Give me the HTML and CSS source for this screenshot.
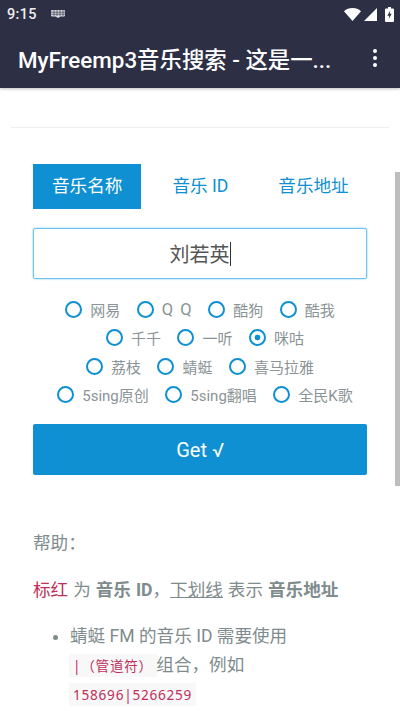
FILE: index.html
```html
<!doctype html>
<html lang="zh-cn">
<head>
<meta charset="UTF-8">
<title>MyFreemp3音乐搜索</title>
<link rel="stylesheet" href="styles.css">
</head>
<body>
<div class="phone">
	<header class="appbar">
		<div class="status">
			<span class="time">9:15</span>
			<svg class="kbd" width="14" height="8" viewBox="0 0 14 8"><path fill="#d9d9de" d="M1 0h12a1 1 0 0 1 1 1v4.500a1 1 0 0 1-1 1H9.500L7 8 4.500 6.500H1a1 1 0 0 1-1-1V1a1 1 0 0 1 1-1z"/><path stroke="#2d2f45" stroke-width=".6" d="M0 2.200h14M0 4.200h14M3 0v6M6 0v6M9 0v6M12 0v6"/></svg>
			<span class="status_icons">
				<svg class="wifi" width="17" height="13" viewBox="0 0 17 13"><path fill="#fff" d="M0 3.200C2.300 1.200 5.200 0 8.500 0s6.200 1.200 8.500 3.200L8.500 13z"/></svg>
				<svg class="signal" width="13" height="13" viewBox="0 0 13 13"><path fill="#fff" d="M13 0v13H0z"/></svg>
				<svg width="9" height="15" viewBox="0 0 9 15"><path fill="#fff" fill-rule="evenodd" d="M3 0h3v1.500h2a1 1 0 0 1 1 1V14a1 1 0 0 1-1 1H1a1 1 0 0 1-1-1V2.500a1 1 0 0 1 1-1h2zM5.300 3.500L2.300 8.800h1.900l-.5 3.200 3-5.300H4.800z"/></svg>
			</span>
		</div>
		<div class="toolbar">
			<h1>MyFreemp3音乐搜索 - 这是一...</h1>
			<div class="more"><i></i><i></i><i></i></div>
		</div>
	</header>
	<main class="content">
		<hr class="top_line">
		<div class="tabs">
			<a class="tab current">音乐名称</a>
			<a class="tab">音乐 ID</a>
			<a class="tab">音乐地址</a>
		</div>
		<div class="search_box"><span class="search_text">刘若英</span><span class="caret"></span></div>
		<div class="sources">
			<div class="source_row">
				<label class="source"><span class="radio"></span>网易</label>
				<label class="source"><span class="radio"></span><span class="qq">Q Q</span></label>
				<label class="source"><span class="radio"></span>酷狗</label>
				<label class="source"><span class="radio"></span>酷我</label>
			</div>
			<div class="source_row shift">
				<label class="source"><span class="radio"></span>千千</label>
				<label class="source"><span class="radio"></span>一听</label>
				<label class="source"><span class="radio checked"></span>咪咕</label>
			</div>
			<div class="source_row">
				<label class="source"><span class="radio"></span>荔枝</label>
				<label class="source"><span class="radio"></span>蜻蜓</label>
				<label class="source"><span class="radio"></span>喜马拉雅</label>
			</div>
			<div class="source_row shift">
				<label class="source"><span class="radio"></span>5sing原创</label>
				<label class="source"><span class="radio"></span>5sing翻唱</label>
				<label class="source"><span class="radio"></span>全民K歌</label>
			</div>
		</div>
		<button class="get_btn">Get √</button>
		<p class="help_title">帮助：</p>
		<p class="help_line"><span class="red">标红</span> 为 <strong>音乐 ID</strong>，<u>下划线</u> 表示 <strong>音乐地址</strong></p>
		<ul class="help_list">
			<li>蜻蜓 FM 的音乐 ID 需要使用<br><code>|（管道符）</code> 组合，例如<br><code>158696|5266259</code></li>
		</ul>
	</main>
	<div class="scrollbar"></div>
</div>
</body>
</html>
```
FILE: styles.css
```css
html,body {margin: 0;padding: 0;}
body {font-family: Roboto,"Noto Sans CJK SC",sans-serif;background-color: #fff;}

.phone {position: relative;width: 400px;height: 711px;overflow: hidden;}

/* 顶部 */
.appbar {height: 88px;background-color: #2d2f45;color: #fff;box-shadow: 0 1px 3px rgba(0,0,0,.25);}
.status {display: flex;align-items: center;height: 28px;padding: 0 6px 0 7px;}
.time {font-size: 14.500px;font-weight: 500;color: #eee;letter-spacing: .3px;}
.kbd {margin-left: 14px;}
.status_icons {display: flex;align-items: center;margin-left: auto;}
.signal {margin: 0 8px 0 3px;}
.toolbar {display: flex;align-items: center;justify-content: space-between;height: 62px;padding: 0 23px 2px 18px;box-sizing: border-box;}
.toolbar h1 {margin: 0;font-size: 22.400px;font-weight: 500;white-space: nowrap;}
.more {display: flex;flex-direction: column;gap: 3px;}
.more i {display: block;width: 4px;height: 4px;border-radius: 50%;background-color: #fff;}

/* 内容 */
.content {padding: 39px 33px 0;color: #7f8c8d;font-size: 17.600px;}
.top_line {height: 1px;margin: 0 -22px 36px;border: 0 none;background-color: #eee;}

.tabs {display: flex;}
.tab {display: block;height: 45px;padding: 0 19px;line-height: 45px;font-size: 17.600px;color: #0e90d2;white-space: nowrap;}
.tab + .tab {margin-left: 12px;}
.tab.current {background-color: #0e90d2;color: #fff;}

.search_box {display: flex;align-items: center;justify-content: center;box-sizing: border-box;height: 51px;margin-top: 19px;border: 1px solid #6cc3ee;border-radius: 2px;box-shadow: 0 0 2px #6cc3ee;color: #555;font-size: 20px;}
.caret {width: 1px;height: 24px;background-color: #333;}

.sources {margin-top: 16px;}
.source_row {display: flex;justify-content: center;gap: 16.500px;height: 28.500px;align-items: center;}
.source_row.shift {padding-left: 10px;}
.source {display: flex;align-items: center;font-size: 15px;color: #8a9496;}
.qq {font-size: 16.500px;word-spacing: 3px;}
.radio {box-sizing: border-box;width: 17px;height: 17px;margin-right: 8px;border: 2.500px solid #0e90d2;border-radius: 50%;background-color: #fff;}
.radio.checked {background: radial-gradient(circle,#0e90d2 0,#0e90d2 2.600px,#fff 3.200px);}

.get_btn {display: block;width: 100%;height: 51px;margin-top: 15px;padding: 0;border: 0 none;border-radius: 2px;background-color: #0e90d2;color: #fff;font-family: inherit;font-size: 20px;}

.help_title {margin: 56px 0 0;line-height: 24px;}
.help_line {margin: 23px 0 0;line-height: 24px;white-space: nowrap;word-spacing: .6px;}
.help_line strong {font-weight: 700;}
.red {color: #be2f59;}
.help_list {margin: 20px 0 0;padding: 0 0 0 37px;line-height: 29px;}
code {margin: 0 -5px 0 -1px;padding: 2px 4px;background-color: #f8f8f8;color: #be2f59;font-family: "Noto Sans",Roboto,"Noto Sans CJK SC",sans-serif;font-size: 13.600px;letter-spacing: .75px;}

.scrollbar {position: absolute;top: 172px;right: 0;width: 5px;height: 314px;background-color: #bdbdbd;}
```
